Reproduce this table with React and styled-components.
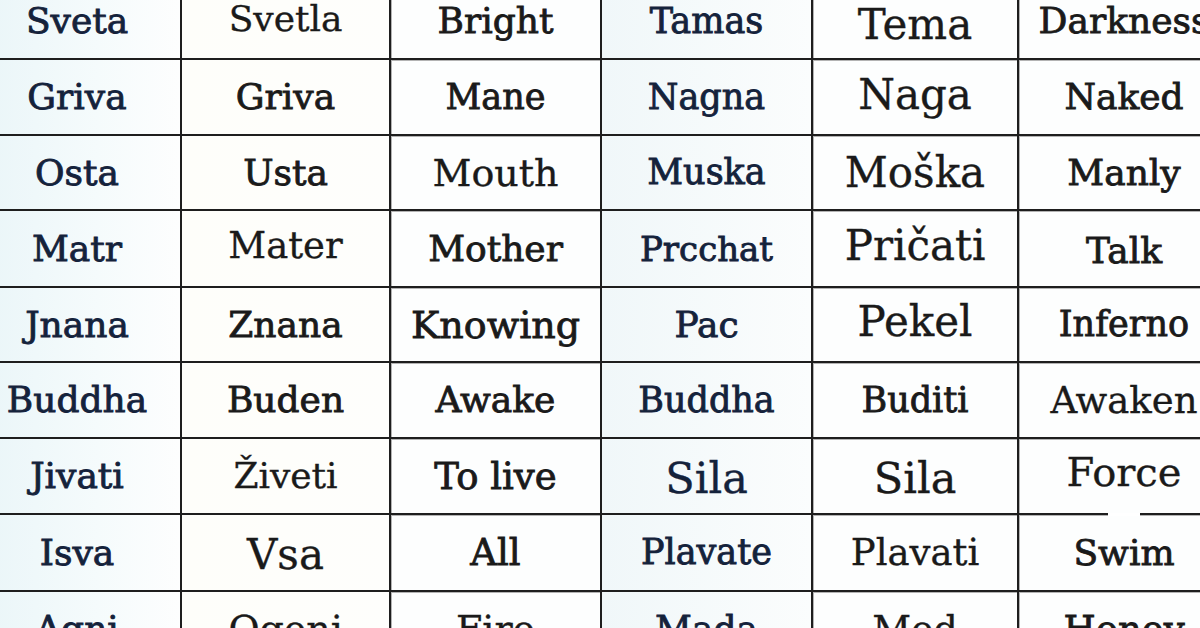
import React from 'react';
import styled, { createGlobalStyle } from 'styled-components';

const GlobalStyle = createGlobalStyle`
  html, body {
    margin: 0;
    padding: 0;
    background: #ffffff;
  }
  body {
    width: 1200px;
    height: 628px;
    overflow: hidden;
  }
`

const Page = styled.div`
  width: 1200px;
  height: 628px;
  overflow: hidden;
  background: #fdfefe;
`

const Table = styled.div`
  display: grid;
  grid-template-columns: 208px 209px 211px 211px 206px 212px;
  grid-template-rows: 76px 76px 75px 77px 75px 76px 76px 77px 76px;
  margin-left: -26px;
  margin-top: -16px;
  width: max-content;
`

const Cell = styled.div`
  position: relative;
  display: flex;
  align-items: center;
  justify-content: center;
  box-sizing: border-box;
  border-right: 2px solid #1e1e1e;
  border-bottom: 2px solid #1e1e1e;
  box-shadow: 1px 1px 0 rgba(40, 40, 40, 0.35);
  background: ${p => p.$tint || 'transparent'};
  font-family: "DejaVu Serif", "Liberation Serif", serif;
  font-size: ${p => p.$size}px;
  color: ${p => (p.$navy ? '#14223b' : '#1a1a1a')};
  -webkit-text-stroke: ${p => (p.$light ? '0.35px currentColor' : '0.85px currentColor')};
  white-space: nowrap;
  line-height: 1;

  & > span {
    transform: translate(${p => p.$dx || 0}px, ${p => p.$dy || 0}px);
  }

  ${p => p.$gap && `
    &::after {
      content: "";
      position: absolute;
      bottom: -3px;
      left: ${p.$gap[0]}px;
      width: ${p.$gap[1]}px;
      height: 3px;
      background: #ffffff;
    }
  `}
`

// [text, size, light, dx, dy]
const rows = [
  [['Sveta', 36], ['Svetla', 36, 1, 0, -2], ['Bright', 36], ['Tamas', 35], ['Tema', 42, 1, 0, 4], ['Darkness', 36]],
  [['Griva', 36], ['Griva', 36], ['Mane', 35], ['Nagna', 35], ['Naga', 42, 1, 0, -2], ['Naked', 36]],
  [['Osta', 36], ['Usta', 36], ['Mouth', 38, 1], ['Muska', 35], ['Moška', 42, 1], ['Manly', 36]],
  [['Matr', 36], ['Mater', 37, 1, 0, -3], ['Mother', 36], ['Prcchat', 34], ['Pričati', 42, 1, 0, -3], ['Talk', 36, 0, 0, 2]],
  [['Jnana', 36], ['Znana', 36], ['Knowing', 38], ['Pac', 36], ['Pekel', 42, 1, 0, -3], ['Inferno', 35]],
  [['Buddha', 36], ['Buden', 36], ['Awake', 36], ['Buddha', 35], ['Buditi', 35], ['Awaken', 37, 1]],
  [['Jivati', 36], ['Živeti', 36, 1], ['To live', 37], ['Sila', 43, 1, 0, 2], ['Sila', 43, 1, 0, 2], ['Force', 40, 1, 0, -4]],
  [['Isva', 36], ['Vsa', 42, 1, 0, 2], ['All', 37], ['Plavate', 35], ['Plavati', 37, 1], ['Swim', 36]],
  [['Agni', 36], ['Ogenj', 38, 1], ['Fire', 38, 1], ['Mada', 36], ['Med', 38, 1], ['Honey', 37]],
]

const tints = [
  'linear-gradient(90deg, #e9f5f8 0%, #f5fbfc 60%, #fdfefe 100%)',
  'linear-gradient(90deg, #fefefa 0%, #fefefc 100%)',
  null,
  'linear-gradient(90deg, #f0f7f9 0%, #fbfdfd 100%)',
  null,
  null,
]

export default function App() {
  return (
    <Page>
      <GlobalStyle />
      <Table>
        {rows.map((row, r) =>
          row.map(([text, size, light, dx, dy], c) => (
            <Cell
              key={`${r}-${c}`}
              $size={size}
              $light={!!light}
              $navy={c === 0 || c === 3}
              $tint={tints[c]}
              $dx={dx}
              $dy={dy}
              $gap={r === 6 && c === 5 ? [89, 32] : null}
            >
              <span>{text}</span>
            </Cell>
          ))
        )}
      </Table>
    </Page>
  );
}
